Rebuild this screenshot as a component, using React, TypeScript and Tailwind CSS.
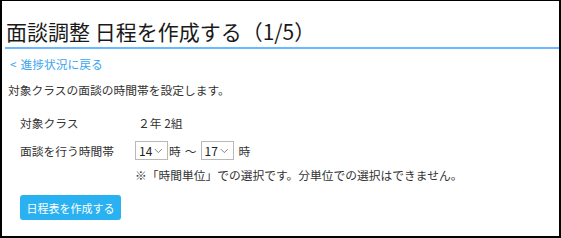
import { ChevronDown } from 'lucide-react'

const font = { fontFamily: '"Noto Sans CJK JP", "Noto Sans", sans-serif' }

function HourSelect({ value }: { value: string }) {
  return (
    <div className="flex h-[19px] w-[33px] items-center justify-between border border-[#b8b8b8] bg-white pl-[3px] pr-[2px] text-[12px] text-[#222]">
      <span>{value}</span>
      <ChevronDown size={14} strokeWidth={1.4} className="text-[#555]" />
    </div>
  )
}

export default function App() {
  return (
    <div
      className="h-[238px] w-[561px] overflow-hidden border-t border-l-2 border-r-2 border-b-2 border-black bg-white"
      style={font}
    >
      <div className="pl-[3px]">
        <h1 className="border-b-2 border-[#6cb8ff] pt-[16px] pb-[2px] pl-[1px] text-[21px] leading-[28px] text-[#1a1a1a]">
          面談調整 日程を作成する（1/5）
        </h1>

        <a href="#" className="mt-[7px] flex gap-[4px] pl-[5px] text-[11.75px] leading-[16px] text-[#3aa6ef]">
          <span>&lt;</span>
          <span>進捗状況に戻る</span>
        </a>

        <p className="mt-[10px] pl-[3px] text-[11.75px] leading-[16px] text-[#333]">
          対象クラスの面談の時間帯を設定します。
        </p>

        <div className="mt-[17px] pl-[15px] text-[11.75px] leading-[16px] text-[#333]">
          <div className="flex items-center">
            <span className="w-[115px]">対象クラス</span>
            <span className="pl-[3px]">２年 2組</span>
          </div>

          <div className="mt-[10px] flex items-center">
            <span className="w-[115px]">面談を行う時間帯</span>
            <HourSelect value="14" />
            <span className="ml-[1px]">時</span>
            <span className="mx-[4px]">〜</span>
            <HourSelect value="17" />
            <span className="ml-[5px]">時</span>
          </div>

          <p className="mt-[7px] pl-[115px]">
            ※「時間単位」での選択です。分単位での選択はできません。
          </p>

          <button className="mt-[12px] flex h-[25px] w-[101px] items-center justify-center rounded-[3px] bg-[#29b1f2] text-[11px] text-white">
            日程表を作成する
          </button>
        </div>
      </div>
    </div>
  )
}
